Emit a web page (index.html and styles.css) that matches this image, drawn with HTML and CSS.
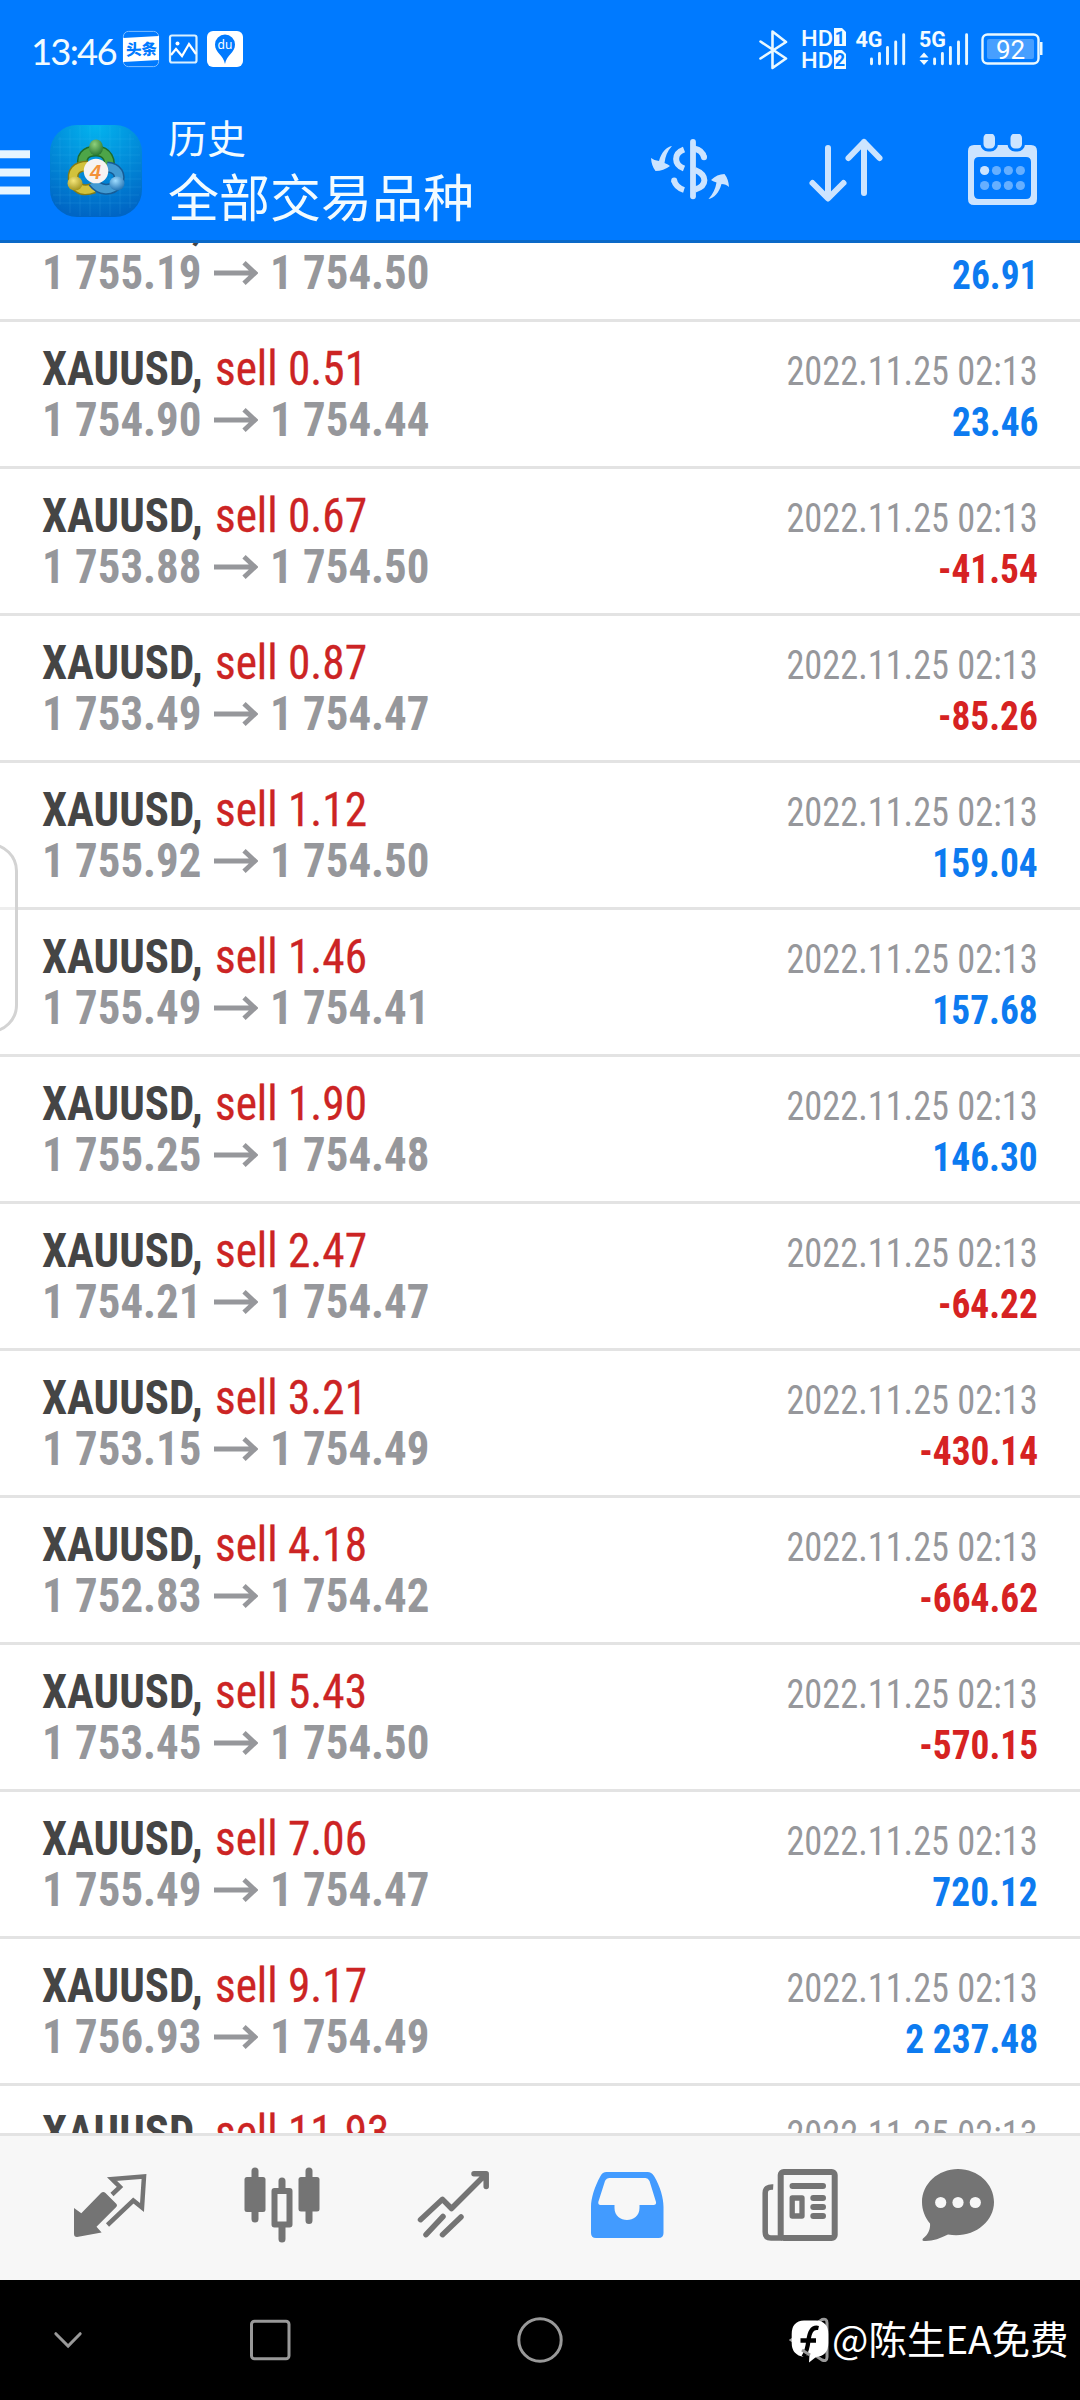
FILE: index.html
```
<!DOCTYPE html>
<html lang="zh-CN">
<head>
<meta charset="utf-8">
<title>历史</title>
<link rel="stylesheet" href="styles.css">
</head>
<body>
<svg class="defs" width="0" height="0" aria-hidden="true">
  <symbol id="arrow" viewBox="0 0 44 24"><path d="M0 12H40M30 1.8L41 12L30 22.2" fill="none" stroke="#96979b" stroke-width="4.8"/></symbol>
</svg>
<header class="header">
  <div class="status">
    <span class="clock">13:46</span>
    <svg class="status-left" width="122" height="38" viewBox="122 30 122 38">
      <rect x="123.4" y="31.4" width="35.2" height="35.2" rx="5" fill="none" stroke="#7fbdff" stroke-width="1"/>
      <path d="M123 38L159 36V60L123 62Z" fill="#fff"/>
      <text x="126" y="55" class="toutiao" transform="rotate(-2 141 49)">头条</text>
      <rect x="170" y="35.5" width="26.5" height="27" rx="2" fill="none" stroke="#d9f0ff" stroke-width="2.2"/>
      <path d="M171 55L176 49L182 56L189 44L196 54" fill="none" stroke="#fff" stroke-width="2.2"/>
      <circle cx="177.500" cy="43.500" r="2" fill="#fff"/>
      <rect x="207" y="31" width="36" height="36" rx="6" fill="#fff"/>
      <path d="M225 64C223.500 55 215 53 215 44.500A10 10 0 0 1 235 44.500C235 53 226.500 55 225 64Z" fill="#007aff"/>
      <text x="225" y="49" class="du">du</text>
    </svg>
    <svg class="status-right" width="290" height="46" viewBox="755 26 290 46" fill="none" stroke="#e9f8ff">
      <path d="M760.500 41.500L786 58.500L772.500 68V31.500L786 42L760.500 58.500" stroke-width="2.600" stroke-linejoin="round" stroke-linecap="round"/>
      <g stroke="none" fill="#f2fbff">
        <text x="801" y="46" class="hd" textLength="32" lengthAdjust="spacingAndGlyphs">HD</text>
        <text x="801" y="68" class="hd" textLength="32" lengthAdjust="spacingAndGlyphs">HD</text>
        <path d="M834 28H842L846 32V46H834ZM834 50H842L846 54V69H834Z"/>
        <text x="840" y="43.500" class="sim">1</text>
        <text x="840" y="66" class="sim">2</text>
        <text x="855.500" y="47" class="net" textLength="27" lengthAdjust="spacingAndGlyphs">4G</text>
        <text x="919" y="47" class="net" textLength="27" lengthAdjust="spacingAndGlyphs">5G</text>
        <path d="M924 52.500L928.500 57.500H919.500ZM924 65L928.500 60H919.500Z"/>
      </g>
      <path d="M871.500 59V63.700M879.500 53.500V63.700M887.500 47.500V63.700M895.700 42V63.700M903.700 34.800V63.700M934.600 59V63.700M942.400 53.500V63.700M950.400 47.500V63.700M958.500 42V63.700M966.600 34.800V63.700" stroke-width="2.900" stroke-linecap="round"/>
      <rect x="982.500" y="34.500" width="56" height="29" rx="5" stroke-width="2.400"/>
      <path d="M1040 42h2.500v13h-2.500z" fill="#e9f8ff" stroke="none"/>
      <rect x="987" y="39" width="47" height="20" rx="2" fill="#479fff" stroke="none"/>
      <text x="1010.500" y="58.500" class="battery">92</text>
    </svg>
  </div>
  <div class="toolbar">
    <svg class="menu" width="30" height="46" viewBox="0 0 30 46"><path d="M0 4.200H30M0 22.500H30M0 40.500H30" stroke="#e6f5ff" stroke-width="8"/></svg>
    <svg class="app" width="92" height="92" viewBox="0 0 92 92">
      <defs>
        <radialGradient id="bg" cx=".5" cy="0" r="1"><stop offset="0" stop-color="#03b4ef"/><stop offset="1" stop-color="#0065c4"/></radialGradient>
        <radialGradient id="g" cx=".4" cy=".3" r=".8"><stop offset="0" stop-color="#8fd07c"/><stop offset="1" stop-color="#1c6d27"/></radialGradient>
        <radialGradient id="y" cx=".4" cy=".3" r=".8"><stop offset="0" stop-color="#f5e67a"/><stop offset="1" stop-color="#988a14"/></radialGradient>
        <radialGradient id="b" cx=".4" cy=".3" r=".8"><stop offset="0" stop-color="#9fdcff"/><stop offset="1" stop-color="#1467ab"/></radialGradient>
      </defs>
      <rect width="92" height="92" rx="27" fill="url(#bg)"/>
      <path d="M10 12V80M20 4V88M30 1V91M40 1V91M50 1V91M60 1V91M70 3V89M80 9V83M8 14H84M2 30H90M1 46H91M1 62H91M5 78H87M3 22H89M1 38H91M1 54H91M3 70H89" stroke="#5cc8ff" stroke-opacity=".13" fill="none"/>
      <path d="M35 45C28 31 37 26 46 26C57 26 62 35 58 47" fill="none" stroke="#1d6c2a" stroke-width="11"/>
      <path d="M35 45C28 31 37 26 46 26C57 26 62 35 58 47" fill="none" stroke="#4da548" stroke-width="8"/>
      <path d="M38 41C26 41 21 47 24 57C28 66 36 66 44 63" fill="none" stroke="#857c14" stroke-width="11"/>
      <path d="M38 41C26 41 21 47 24 57C28 66 36 66 44 63" fill="none" stroke="#d2c23c" stroke-width="8"/>
      <path d="M57 42C68 43 71 50 68 58C61 67 50 66 43 57" fill="none" stroke="#175c96" stroke-width="11"/>
      <path d="M57 42C68 43 71 50 68 58C61 67 50 66 43 57" fill="none" stroke="#429ad2" stroke-width="8"/>
      <ellipse cx="46" cy="22.500" rx="7" ry="8" fill="url(#g)"/>
      <ellipse cx="25" cy="58.500" rx="7.500" ry="7" fill="url(#y)"/>
      <ellipse cx="67" cy="58.500" rx="7.500" ry="7" fill="url(#b)"/>
      <circle cx="46" cy="46" r="12.300" fill="#f6f3f2"/>
      <text x="45.500" y="53.500" class="four">4</text>
    </svg>
    <div class="titles"><div class="title">历史</div><div class="subtitle">全部交易品种</div></div>
    <svg class="act-dollar" width="80" height="62" viewBox="650 138 80 62" fill="none" stroke="#cce4ff">
      <path d="M693 142V196.300" stroke-width="5.800" stroke-linecap="round"/>
      <path d="M684 149.500C673.500 153.500 673.500 164.500 684 168.500M674 180.500C675.500 185.500 679 188.500 684 190M694 148.500C699 149.500 703 152 704 157.500M695 170C707.500 175 707.500 186 695 189.500" stroke-width="6"/>
      <circle cx="704" cy="157.300" r="3" fill="#cce4ff" stroke="none"/><circle cx="674.200" cy="180.500" r="3" fill="#cce4ff" stroke="none"/>
      <path d="M672 146C666.500 147 661.500 152 659 161Q654 160.500 651 158Q651.500 166 655.500 171Q663.500 171 670 166Q668.500 164.500 664.500 163Q665.500 153 672 146ZM708.500 199C714 198 719 193 721.500 184Q726 184 729 187Q728.500 179 724.500 174Q717 174 711 180Q712.500 181 716.500 182.500Q715 192 708.500 199Z" fill="#cce4ff" stroke="none"/>
    </svg>
    <svg class="act-sort" width="76" height="66" viewBox="808 137 76 66" fill="none" stroke="#cce4ff" stroke-width="6" stroke-linecap="round" stroke-linejoin="round"><path d="M828 148V198M812.500 183L828 198.500L843.500 183M864 193V142M848.500 158L864 142L879.500 158"/></svg>
    <svg class="act-cal" width="70" height="72" viewBox="968 134 70 72">
      <path fill="#cce4ff" fill-rule="evenodd" d="M974 145H1031Q1037 145 1037 151V199Q1037 205 1031 205H974Q968 205 968 199V151Q968 145 974 145ZM979 157Q974 157 974 162V194Q974 199 979 199H1026Q1031 199 1031 194V162Q1031 157 1026 157Z"/>
      <rect x="982" y="132" width="14.500" height="18" rx="6" fill="#cce4ff" stroke="#007aff" stroke-width="3"/>
      <rect x="1009" y="132" width="14.500" height="18" rx="6" fill="#cce4ff" stroke="#007aff" stroke-width="3"/>
      <circle cx="984.600" cy="170.500" r="4.600" fill="#cce4ff"/>
      <g fill="#66afff"><circle cx="996.500" cy="170.500" r="4.600"/><circle cx="1008.400" cy="170.500" r="4.600"/><circle cx="1020.400" cy="170.500" r="4.600"/><circle cx="984.600" cy="185.500" r="4.600"/><circle cx="996.500" cy="185.500" r="4.600"/><circle cx="1008.400" cy="185.500" r="4.600"/><circle cx="1020.400" cy="185.500" r="4.600"/></g>
    </svg>
  </div>
</header>
<main class="history">
  <ul class="deals" id="deals"></ul>
  <div class="handle"></div>
</main>
<nav class="tabs">
  <svg width="74" height="74" viewBox="73 2169 74 74"><path d="M74 2209L81.300 2214.300L101 2194Q103.300 2192 105.500 2194L116 2204.500Q118 2206.300 116 2208.300L96.500 2227.700L101.600 2233.500L77 2238Q74 2238 74 2235Z" fill="#747474"/><path d="M112 2195.500L120 2188L112 2180L144 2177.500L142 2208.500L133.300 2201.500L107.500 2226" fill="none" stroke="#747474" stroke-width="4.500"/></svg>
  <svg width="76" height="76" viewBox="243.500 2168 76 76" fill="#747474"><rect x="244" y="2178" width="21" height="35" rx="2.500"/><rect x="298" y="2178" width="21" height="34.500" rx="2.500"/><rect x="274" y="2192" width="15" height="33.500" fill="#f7f7f7" stroke="#747474" stroke-width="6" stroke-linejoin="round"/><path d="M254.500 2172V2220M308.500 2172V2221.500M281.500 2182V2190M281.500 2228V2240" stroke="#747474" stroke-width="7" stroke-linecap="round"/></svg>
  <svg width="74" height="74" viewBox="417 2169 74 74" fill="none" stroke="#747474" stroke-width="5.500" stroke-linecap="round" stroke-linejoin="round"><path d="M420.500 2220.700L442.500 2200.300L451.500 2209.500L486 2175M474 2174.700H486.200V2187.500M426 2235.700L443 2217.500M442.500 2235.700L461 2218"/></svg>
  <svg width="73" height="72" viewBox="590.500 2169 73 72" fill="#429bff" fill-rule="evenodd"><path d="M606 2172H647Q651 2172 653.500 2176C660 2187 663 2198 663 2207V2233Q663 2238 658 2238H595.500Q590.500 2238 590.500 2233V2207C590.500 2198 594 2187 600 2176Q602 2172 606 2172ZM609 2178Q606 2178 604.500 2181L597.800 2202Q597.500 2205 600 2205H614V2208C614 2224 639 2224 639 2208V2205H653Q656 2205 655.500 2202L649 2181Q647.500 2178 645 2178Z"/></svg>
  <svg width="76" height="74" viewBox="762 2168 76 74" fill="none" stroke="#747474" stroke-width="6"><rect x="780.700" y="2172" width="54" height="66" rx="3"/><path d="M773.200 2187Q765.200 2186.500 765.200 2193V2232Q765.200 2238 771 2238H782" stroke-width="5.500"/><path d="M792.500 2186H823M813.300 2198H823M813.300 2207H823M813.300 2216H823" stroke-linecap="round"/><rect x="792.200" y="2198" width="9.800" height="18" stroke-width="5.300" stroke-linejoin="round"/></svg>
  <svg width="74" height="74" viewBox="921 2168 74 74" fill="#747474"><path d="M958 2169C978 2169 994 2184 994 2202C994 2223 972 2239 948 2234.500C940 2238.500 932 2241.500 924 2241Q921.500 2240.500 923 2238.500C929 2234 930.500 2228 930 2223.500C925 2217.500 922 2210 922 2202C922 2184 938 2169 958 2169Z"/><g fill="#f7f7f7"><circle cx="940.700" cy="2202.500" r="5.600"/><circle cx="958" cy="2202.500" r="5.600"/><circle cx="975.300" cy="2202.500" r="5.600"/></g></svg>
</nav>
<footer class="sysnav">
  <svg width="30" height="18" viewBox="53 2331 30 18" fill="none" stroke="#999" stroke-width="3" stroke-linecap="round"><path d="M55.800 2333.700L68.100 2346L80.200 2333.700"/></svg>
  <svg width="42" height="42" viewBox="249 2319 42 42" fill="none" stroke="#999" stroke-width="3"><rect x="251.500" y="2321.300" width="37.500" height="37.500" rx="3"/></svg>
  <svg width="48" height="48" viewBox="516 2316 48 48" fill="none" stroke="#999" stroke-width="3"><circle cx="540" cy="2340" r="21.200"/></svg>
  <div class="watermark">
    <svg width="42" height="50" viewBox="789 2315 42 50">
      <path d="M791.500 2340L822 2319.500Q827 2318 827 2323V2357Q827 2362 822 2360Z" fill="none" stroke="#999" stroke-width="3"/>
      <path d="M804 2320.500H816Q828.300 2321 828.300 2334V2343Q828.300 2356 816 2357L809 2362.500L809.500 2354L804 2357Q791.700 2355 791.700 2343V2334Q791.700 2321 804 2320.500Z" fill="#fff"/>
      <path d="M818.500 2328C811.500 2326.500 809.500 2333 808.500 2340C807.500 2349 806 2353 803.500 2357M800.500 2340.500H816" fill="none" stroke="#000" stroke-width="4.300"/>
      <path d="M802 2350L810 2355" stroke="#999" stroke-width="3"/>
    </svg>
    <span class="author">@陈生EA免费</span>
  </div>
</footer>
<script src="deals.js"></script>
</body>
</html>
```
FILE: deals.js
```
const deals = [
  ['', '1 755.19', '1 754.50', '26.91'],
  ['0.51', '1 754.90', '1 754.44', '23.46'],
  ['0.67', '1 753.88', '1 754.50', '-41.54'],
  ['0.87', '1 753.49', '1 754.47', '-85.26'],
  ['1.12', '1 755.92', '1 754.50', '159.04'],
  ['1.46', '1 755.49', '1 754.41', '157.68'],
  ['1.90', '1 755.25', '1 754.48', '146.30'],
  ['2.47', '1 754.21', '1 754.47', '-64.22'],
  ['3.21', '1 753.15', '1 754.49', '-430.14'],
  ['4.18', '1 752.83', '1 754.42', '-664.62'],
  ['5.43', '1 753.45', '1 754.50', '-570.15'],
  ['7.06', '1 755.49', '1 754.47', '720.12'],
  ['9.17', '1 756.93', '1 754.49', '2 237.48'],
  ['11.93', '', '', '']
];

document.getElementById('deals').innerHTML = deals.map(([volume, open, close, profit]) => `
  <li class="deal">
    <div class="line">
      <span class="symbol">XAUUSD,</span>
      <span class="order">${volume && 'sell ' + volume}</span>
      <span class="date">${volume && '2022.11.25 02:13'}</span>
    </div>
    ${open && `<div class="line">
      <span class="price">${open}</span>
      <svg class="arrow" width="44" height="24"><use href="#arrow"/></svg>
      <span class="price">${close}</span>
      <span class="profit${profit[0] === '-' ? ' loss' : ''}">${profit}</span>
    </div>`}
  </li>`).join('');
```
FILE: styles.css
```
* { box-sizing: border-box; }
body {
  margin: 0;
  width: 1080px;
  height: 2400px;
  overflow: hidden;
  display: flex;
  flex-direction: column;
  font-family: "Roboto Condensed", Roboto, "Noto Sans CJK SC", sans-serif;
  background: #fff;
}
svg { display: block; flex: none; }
.defs { position: absolute; }

.header {
  height: 243px;
  flex: none;
  background: #007aff;
  border-bottom: 3px solid #0a69c8;
  color: #f2fbff;
}
.status {
  height: 98px;
  display: flex;
  align-items: center;
  padding: 0 35px 0 31px;
}
.clock {
  width: 91px;
  font: 36.500px/40px Lato, sans-serif;
  letter-spacing: -1.800px;
  padding-top: 3px;
}
.status-right { margin-left: auto; }
.toutiao { font: 900 15.500px "Noto Sans CJK SC", sans-serif; fill: #007aff; }
.du { font: 12px "Noto Sans", sans-serif; fill: #fff; text-anchor: middle; }
.hd { font: 500 22.500px Roboto, sans-serif; }
.sim { font: bold 18px Roboto, sans-serif; fill: #007aff; text-anchor: middle; }
.net { font: bold 21.500px Roboto, sans-serif; }
.battery { font: 26px Roboto, sans-serif; fill: #fff; stroke: none; text-anchor: middle; }
.four { font: italic bold 20px "Liberation Sans", sans-serif; fill: #f3913a; text-anchor: middle; }

.toolbar {
  height: 142px;
  display: flex;
  align-items: flex-start;
}
.menu { margin-top: 52px; }
.app { margin: 27px 0 0 20px; }
.titles {
  width: 482px;
  padding: 12px 0 0 26px;
  font-family: "Noto Sans CJK SC", sans-serif;
}
.title { font-size: 39px; line-height: 52px; }
.subtitle { font-size: 51px; line-height: 66px; white-space: nowrap; }
.act-dollar { margin: 40px 0 0 26px; }
.act-sort { margin: 39px 0 0 78px; }
.act-cal { margin: 36px 0 0 84px; }

.history {
  position: relative;
  height: 1890px;
  flex: none;
  overflow: hidden;
}
.deals { list-style: none; margin: -68px 0 0; padding: 0; }
.deal {
  height: 147px;
  padding: 21px 42px 0 42px;
  border-bottom: 3px solid #e3e3e3;
}
.line {
  display: flex;
  height: 51px;
  line-height: 51px;
  align-items: baseline;
  white-space: nowrap;
}
.symbol, .order, .price {
  font-size: 48px;
  transform-origin: 0 50%;
}
.symbol { width: 173px; font-weight: 700; color: #454545; transform: scaleX(.935); }
.order { color: #cc2424; -webkit-text-stroke: .3px #cc2424; transform: scaleX(.943); }
.date, .profit {
  margin-left: auto;
  font-size: 40px;
  transform-origin: 100% 50%;
}
.date { color: #96979b; transform: scaleX(.908); }
.profit { font-weight: 700; color: #0d7bf0; transform: scaleX(.935); }
.profit.loss { color: #d62222; }
.price { width: 172px; font-weight: 700; color: #96979b; transform: scaleX(.935); }
.arrow { align-self: center; margin-right: 12px; }
.handle {
  position: absolute;
  left: -40px;
  top: 600px;
  width: 58px;
  height: 190px;
  border: 3px solid #d3d3d3;
  border-radius: 28px;
  background: rgba(255, 255, 255, .4);
}

.tabs {
  height: 147px;
  flex: none;
  display: grid;
  grid-template-columns: 170.500px 173.500px 173.500px 171.500px 159px 74px;
  align-items: center;
  padding: 0 0 6px 73px;
  background: #f7f7f7;
  border-top: 3px solid #e3e3e3;
}
.sysnav {
  height: 120px;
  flex: none;
  display: grid;
  grid-template-columns: 196px 267px 326px 291px;
  align-items: center;
  padding-left: 53px;
  background: #000;
}
.watermark { display: flex; align-items: center; margin-left: -53px; }
.author {
  margin-left: 1px;
  font: 400 38.500px/50px "Noto Sans CJK SC", sans-serif;
  color: #fff;
  white-space: nowrap;
  margin-top: -6px;
}
```
